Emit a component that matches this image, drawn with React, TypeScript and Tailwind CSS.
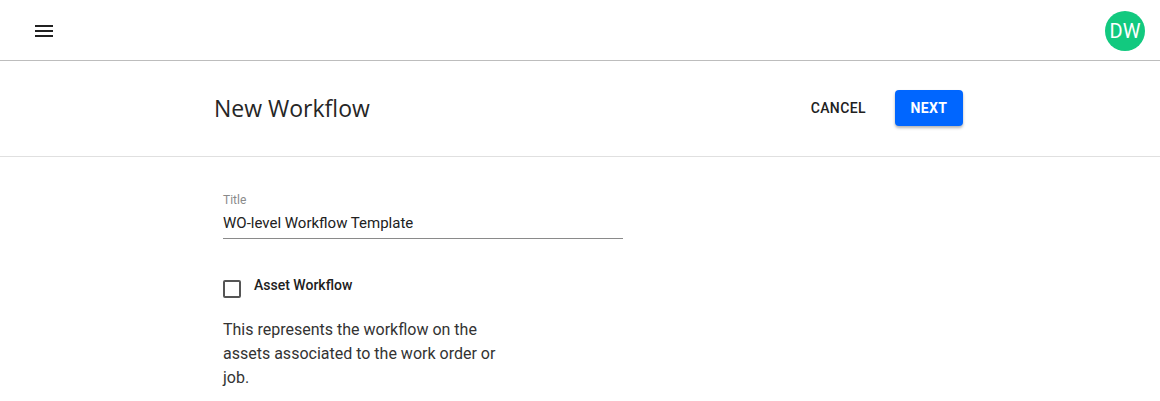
import { useState } from 'react';

export default function App() {
    const [title, setTitle] = useState('WO-level Workflow Template');
    const [asset, setAsset] = useState(false);

    return (
        <div className="min-h-screen bg-white font-['Roboto',sans-serif] text-[#212121]">
            {/* top app bar */}
            <header className="h-[61px] flex items-center justify-between pl-[35px] pr-[15px] border-b border-[#bdbdbd]">
                <button className="w-[18px] h-[12px] mt-[2px] flex flex-col justify-between">
                    <span className="block h-[2px] w-full bg-[#212121]" />
                    <span className="block h-[2px] w-full bg-[#212121]" />
                    <span className="block h-[2px] w-full bg-[#212121]" />
                </button>
                <div className="w-10 h-10 rounded-full bg-[#12c97f] flex items-center justify-center text-white text-[20px] mt-[2px]">
                    DW
                </div>
            </header>

            {/* page title bar */}
            <div className="h-[96px] border-b border-[#e0e0e0] flex items-center pl-[214px] pr-[197px]">
                <h1 className="flex-1 font-['Open_Sans',sans-serif] text-[23px] text-[#262626]">New Workflow</h1>
                <div className="flex items-center gap-[29px]">
                    <button className="text-[14px] font-medium tracking-[0.4px] text-[#212121]">CANCEL</button>
                    <button className="w-[68px] h-[36px] -mt-[1px] rounded bg-[#0066ff] text-white text-[14px] font-bold tracking-[0.4px] shadow-[0_2px_3px_rgba(0,0,0,0.3)]">
                        NEXT
                    </button>
                </div>
            </div>

            {/* form */}
            <div className="pl-[223px] pt-[35px]">
                <div className="w-[400px]">
                    <label className="block text-[12px] text-[#8a8a8a] leading-[16px]">Title</label>
                    <input
                        className="w-full h-[31px] text-[15px] text-[#212121] border-b border-[#8a8a8a] outline-none bg-transparent"
                        value={title}
                        onChange={(e) => setTitle(e.target.value)}
                    />
                </div>

                <label className="mt-[36px] flex items-start gap-[13px] cursor-pointer">
                    <input
                        type="checkbox"
                        checked={asset}
                        onChange={(e) => setAsset(e.target.checked)}
                        className="appearance-none w-[18px] h-[18px] mt-[5px] border-2 border-[#555555] rounded-[2px] checked:bg-[#0066ff] checked:border-[#0066ff]"
                    />
                    <span className="text-[14px] font-medium leading-[20px] text-[#212121]">Asset Workflow</span>
                </label>

                <p className="mt-[20px] w-[290px] text-[16px] leading-[24px] text-[#333333]">
                    This represents the workflow on the assets associated to the work order or job.
                </p>
            </div>
        </div>
    );
}
